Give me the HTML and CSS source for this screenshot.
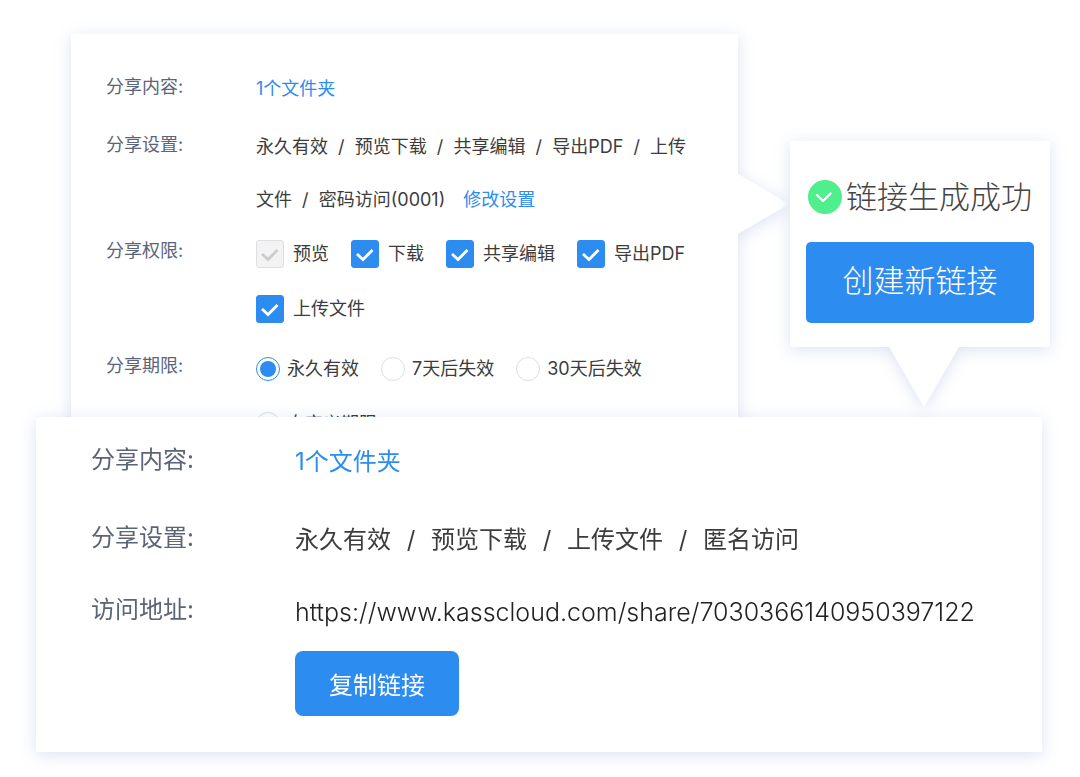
FILE: index.html
```html
<!DOCTYPE html>
<html lang="zh-CN">
<head>
<meta charset="utf-8">
<meta name="viewport" content="width=device-width, initial-scale=1">
<title>分享设置</title>
<link rel="stylesheet" href="styles.css">
</head>
<body>
<main class="page">
  <div class="top">
    <form class="panel settings">
      <div class="field">
        <div class="field-label">分享内容:</div>
        <div class="field-value"><a class="link" href="#folder">1个文件夹</a></div>
      </div>
      <div class="field field-joined">
        <div class="field-label">分享设置:</div>
        <div class="field-value"><span>永久有效&nbsp; / &nbsp;预览下载&nbsp; / &nbsp;共享编辑&nbsp; / &nbsp;导出PDF&nbsp; / &nbsp;上传</span><span>文件&nbsp; / &nbsp;密码访问(0001)</span><a class="link link-edit" href="#edit">修改设置</a></div>
      </div>
      <div class="field" role="group" aria-labelledby="perm">
        <div class="field-label" id="perm">分享权限:</div>
        <div class="field-value options">
          <label class="check"><input type="checkbox" checked disabled>预览</label>
          <label class="check"><input type="checkbox" checked>下载</label>
          <label class="check"><input type="checkbox" checked>共享编辑</label>
          <label class="check"><input type="checkbox" checked>导出PDF</label>
          <label class="check"><input type="checkbox" checked>上传文件</label>
        </div>
      </div>
      <div class="field" role="radiogroup" aria-labelledby="term">
        <div class="field-label" id="term">分享期限:</div>
        <div class="field-value options">
          <label class="radio"><input type="radio" name="term" checked>永久有效</label>
          <label class="radio"><input type="radio" name="term">7天后失效</label>
          <label class="radio"><input type="radio" name="term">30天后失效</label>
          <label class="radio"><input type="radio" name="term">自定义期限</label>
        </div>
      </div>
    </form>
    <section class="panel popup">
      <p class="status">
        <svg class="status-icon" viewBox="0 0 34 34" aria-hidden="true"><circle cx="17" cy="17" r="17" fill="#4eef8c"/><path d="M9 15 15 21 22.5 13.5" fill="none" stroke="#fff" stroke-width="2.4" stroke-linecap="round" stroke-linejoin="round"/></svg>
        <span>链接生成成功</span>
      </p>
      <button class="btn btn-create" type="button">创建新链接</button>
    </section>
  </div>
  <section class="panel result">
    <div class="field">
      <div class="field-label">分享内容:</div>
      <div class="field-value"><a class="link" href="#folder">1个文件夹</a></div>
    </div>
    <div class="field field-near">
      <div class="field-label">分享设置:</div>
      <div class="field-value summary">
        <span>永久有效</span><span class="sep">/</span>
        <span>预览下载</span><span class="sep">/</span>
        <span>上传文件</span><span class="sep">/</span>
        <span>匿名访问</span>
      </div>
    </div>
    <div class="field field-last">
      <div class="field-label">访问地址:</div>
      <div class="field-value">
        <div class="url">https://www.kasscloud.com/share/7030366140950397122</div>
        <button class="btn btn-copy" type="button">复制链接</button>
      </div>
    </div>
  </section>
</main>
</body>
</html>
```
FILE: styles.css
```css
* {
  box-sizing: border-box;
}

body {
  margin: 0;
  background: #fff;
  color: #3c3c3c;
  font-family: Inter, "Noto Sans CJK SC", sans-serif;
  font-weight: 400;
}

.page {
  padding: 34px 0 24px;
}

.top {
  display: flex;
  align-items: flex-start;
  gap: 52px;
  padding: 0 30px 0 71px;
}

.panel {
  position: relative;
  background: #fff;
  filter: drop-shadow(0 3px 8px rgba(50, 95, 180, 0.18));
}

.field {
  display: flex;
  align-items: flex-start;
}

.field-label {
  flex: none;
  color: #5c6478;
}

.field-value {
  flex: 1;
  min-width: 0;
}

.link {
  color: #2d8cf0;
  text-decoration: none;
}

/* Settings form */
.settings {
  flex: 1;
  min-width: 0;
  padding: 28px 36px 0 35px;
  font-size: 18px;
  line-height: 53px;
}

.settings::after {
  content: "";
  position: absolute;
  top: 140px;
  left: 100%;
  width: 51px;
  height: 60px;
  background: #fff;
  clip-path: polygon(0 0, 100% 50%, 0 100%);
}

.settings .field {
  margin-bottom: 5px;
}

.settings .field-joined {
  margin-bottom: 0;
}

.settings .field-label {
  width: 150px;
  line-height: 49px;
}

.link-edit {
  margin-left: 18px;
}

.options {
  display: flex;
  flex-wrap: wrap;
  column-gap: 22px;
  line-height: 55px;
}

.check,
.radio {
  display: flex;
  align-items: center;
}

.check {
  gap: 9px;
}

.radio {
  gap: 7px;
}

.check input,
.radio input {
  appearance: none;
  flex: none;
  margin: 0;
  border: 1px solid #dcdee2;
  background: #fff;
}

.check input {
  width: 28px;
  height: 28px;
  border-radius: 3px;
}

.check input:checked {
  border-color: #2d8cf0;
  background: #2d8cf0 url("data:image/svg+xml,%3Csvg xmlns='http://www.w3.org/2000/svg' viewBox='0 0 26 26'%3E%3Cpath d='M5 13 11 18.5 20.5 9' fill='none' stroke='%23fff' stroke-width='2.8'/%3E%3C/svg%3E") center / 26px no-repeat;
}

.check input:disabled {
  border-color: #dcdee2;
  background: #f3f3f3 url("data:image/svg+xml,%3Csvg xmlns='http://www.w3.org/2000/svg' viewBox='0 0 26 26'%3E%3Cpath d='M5 13 11 18.5 20.5 9' fill='none' stroke='%23ccc' stroke-width='2.8'/%3E%3C/svg%3E") center / 26px no-repeat;
}

.radio input {
  width: 24px;
  height: 24px;
  border-radius: 50%;
}

.radio input:checked {
  padding: 3px;
  border-color: #2d8cf0;
  background: #2d8cf0;
  background-clip: content-box;
}

/* Success popup */
.popup {
  flex: none;
  width: 260px;
  margin-top: 107px;
  padding: 33px 16px 24px;
  font-size: 31px;
  font-weight: 300;
}

.popup::after {
  content: "";
  position: absolute;
  top: 100%;
  left: 99px;
  width: 70px;
  height: 60px;
  background: #fff;
  clip-path: polygon(0 0, 100% 0, 50% 100%);
}

.status {
  display: flex;
  align-items: center;
  gap: 4px;
  margin: 0 0 22px;
  padding-left: 2px;
  color: #444;
  line-height: 46px;
  white-space: nowrap;
}

.status-icon {
  flex: none;
  width: 34px;
  height: 34px;
}

.btn {
  display: block;
  border: 0;
  background: #2d8cf0;
  color: #fff;
  font: inherit;
  cursor: pointer;
}

.btn-create {
  width: 100%;
  height: 81px;
  padding: 0 0 8px;
  border-radius: 5px;
}

/* Result card */
.result {
  margin: -39px 38px 0 36px;
  padding: 15px 36px 36px 55px;
  font-size: 24px;
  line-height: 60px;
}

.result .field {
  margin-bottom: 18px;
}

.result .field-near {
  margin-bottom: 12px;
}

.result .field-last {
  margin-bottom: 0;
}

.result .field-label {
  width: 204px;
  line-height: 56px;
}

.summary {
  display: flex;
  flex-wrap: wrap;
}

.sep {
  width: 40px;
  text-align: center;
}

.url {
  color: #222;
  font-size: 25px;
  font-weight: 300;
  overflow-wrap: anywhere;
}

.btn-copy {
  width: 164px;
  height: 65px;
  margin-top: 9px;
  padding: 4px 0 0;
  border-radius: 8px;
}
```
